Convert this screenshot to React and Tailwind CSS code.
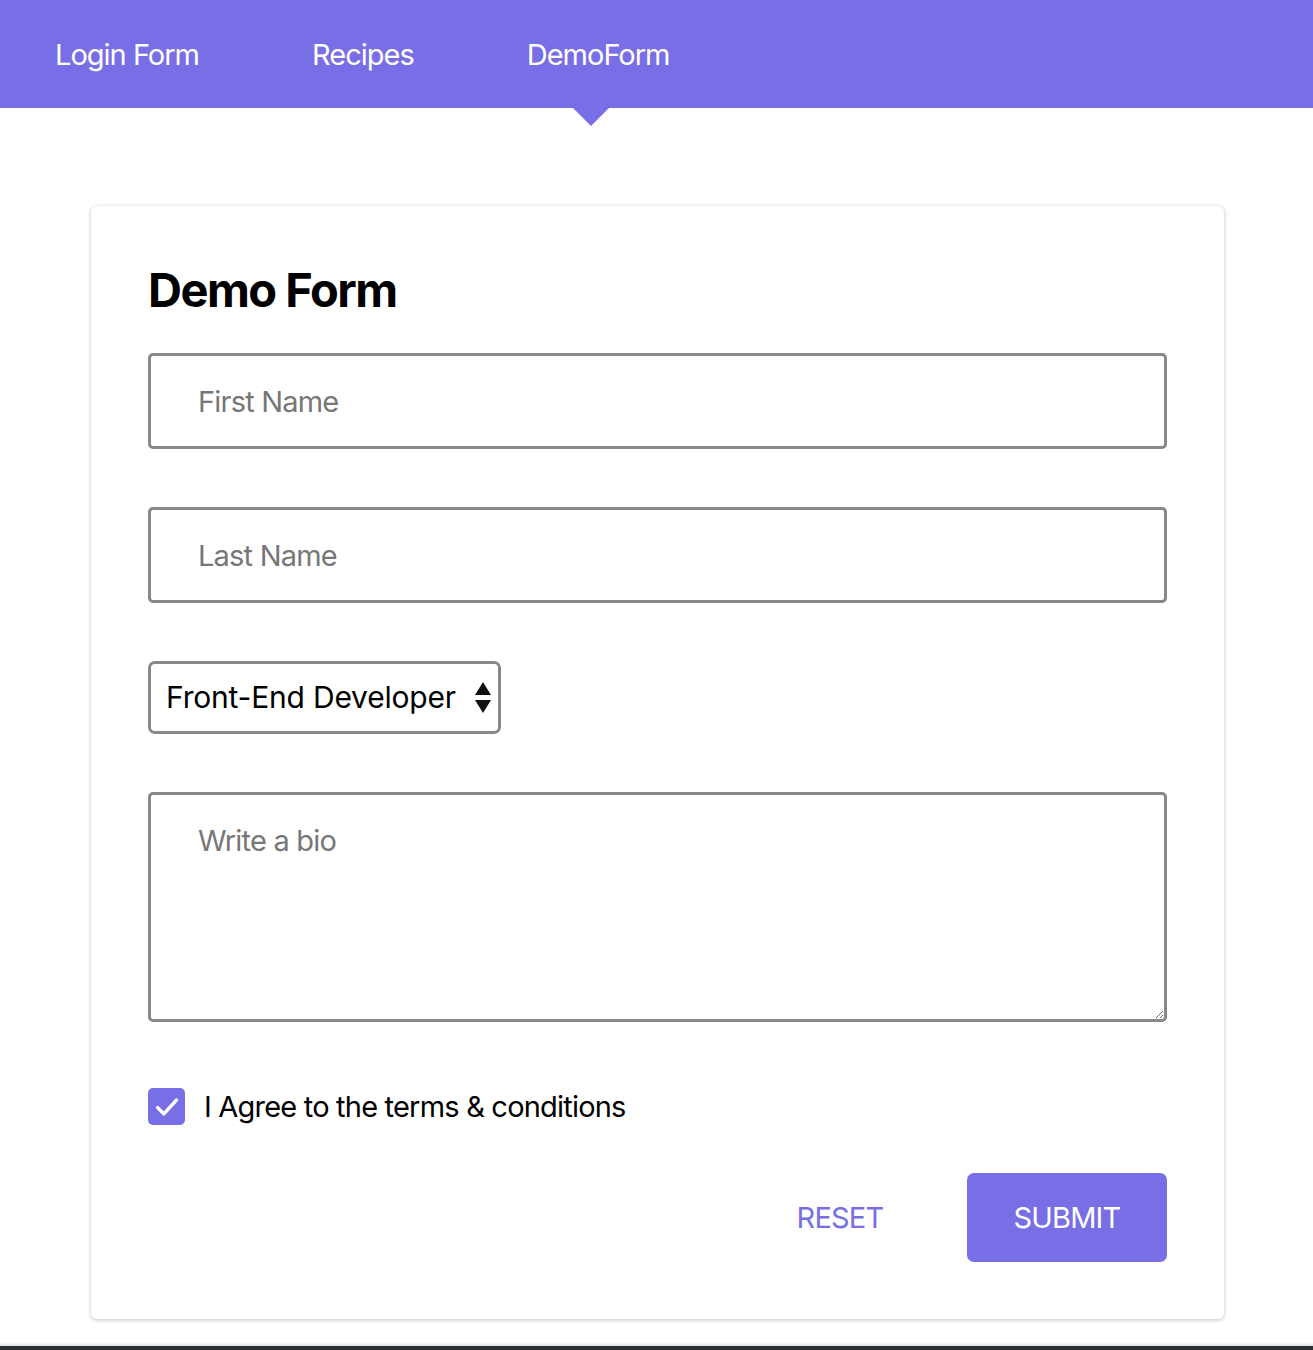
import React, { useState } from 'react';

const PURPLE = 'bg-[#786fe6]';

const NavBar = () => {
  const items = ['Login Form', 'Recipes', 'DemoForm'];
  return (
    <nav className={`${PURPLE} relative h-[108px] flex items-center pt-[2px]`}>
      {items.map((item) => (
        <a
          key={item}
          href="#"
          className="px-[55px] mr-[3px] text-white text-[29px] tracking-[-1px]"
        >
          {item}
        </a>
      ))}
      {/* active marker under DemoForm */}
      <span className="absolute left-[572px] top-[107px] w-0 h-0 border-l-[19px] border-r-[19px] border-t-[19px] border-l-transparent border-r-transparent border-t-[#786fe6]" />
    </nav>
  );
};

const inputCls =
  'block w-full border-[3px] border-[#888888] rounded-[5px] pl-[47px] text-[29px] tracking-[-0.8px] text-black placeholder:text-[#777777] outline-none bg-white';

const DemoForm = () => {
  const [agree, setAgree] = useState(true);

  return (
    <div className="w-[1133px] ml-[91px] mt-[98px] bg-white rounded-[6px] shadow-[0_1px_4px_rgba(0,0,0,0.25)] px-[57px] pt-[60px] pb-[57px]">
      <h1 className="text-[47px] leading-none font-bold text-black tracking-[-1.5px]">Demo Form</h1>

      <input type="text" placeholder="First Name" className={`${inputCls} h-[96px] mt-[40px]`} />
      <input type="text" placeholder="Last Name" className={`${inputCls} h-[96px] mt-[58px]`} />

      <div className="relative w-[353px] h-[73px] mt-[58px]">
        <select
          defaultValue="fe"
          className="appearance-none w-full h-full border-[3px] border-[#888888] rounded-[7px] pl-[15px] pr-[26px] text-[30px] tracking-[-0.2px] text-black bg-white outline-none"
        >
          <option value="fe">Front-End Developer</option>
          <option value="be">Back-End Developer</option>
          <option value="fs">Full-Stack Developer</option>
        </select>
        <svg
          className="absolute right-[10px] top-[21px] pointer-events-none"
          width="16"
          height="31"
          viewBox="0 0 16 31"
        >
          <path d="M8 0 L16 13 L0 13 Z" fill="#111" />
          <path d="M0 18 L16 18 L8 31 Z" fill="#111" />
        </svg>
      </div>

      <textarea
        placeholder="Write a bio"
        className={`${inputCls} h-[230px] mt-[58px] pt-[24px] resize`}
      />

      <label className="flex items-center mt-[66px] cursor-pointer select-none">
        <span
          onClick={() => setAgree(!agree)}
          className={`w-[37px] h-[37px] rounded-[5px] flex items-center justify-center ${
            agree ? PURPLE : 'bg-white border-2 border-[#888]'
          }`}
        >
          {agree && (
            <svg width="30" height="30" viewBox="0 0 24 24" fill="none">
              <path d="M4.5 12.5 L9.5 17.5 L19.5 6.5" stroke="white" strokeWidth="2.8" strokeLinecap="round" strokeLinejoin="round" />
            </svg>
          )}
        </span>
        <span className="ml-[19px] text-[29px] leading-none text-black tracking-[-0.8px]">
          I Agree to the terms &amp; conditions
        </span>
      </label>

      <div className="flex justify-end gap-[27px] mt-[48px]">
        <button type="reset" className="w-[200px] h-[89px] text-[29px] text-[#786fe6] tracking-[-0.8px]">
          RESET
        </button>
        <button type="submit" className={`${PURPLE} w-[200px] h-[89px] rounded-[7px] text-[29px] text-white tracking-[-0.8px]`}>
          SUBMIT
        </button>
      </div>
    </div>
  );
}

export default function App() {
  return (
    <div
      className="min-h-[1350px] flex flex-col bg-white"
      style={{ fontFamily: 'Inter, "Noto Sans", sans-serif' }}
    >
      <NavBar />
      <DemoForm />
      <div className="flex-1" />
      <div className="h-[4px] bg-gradient-to-b from-white to-[#e4e4e4]" />
      <div className="h-[4px] bg-[#2b2f33]" />
    </div>
  );
}
